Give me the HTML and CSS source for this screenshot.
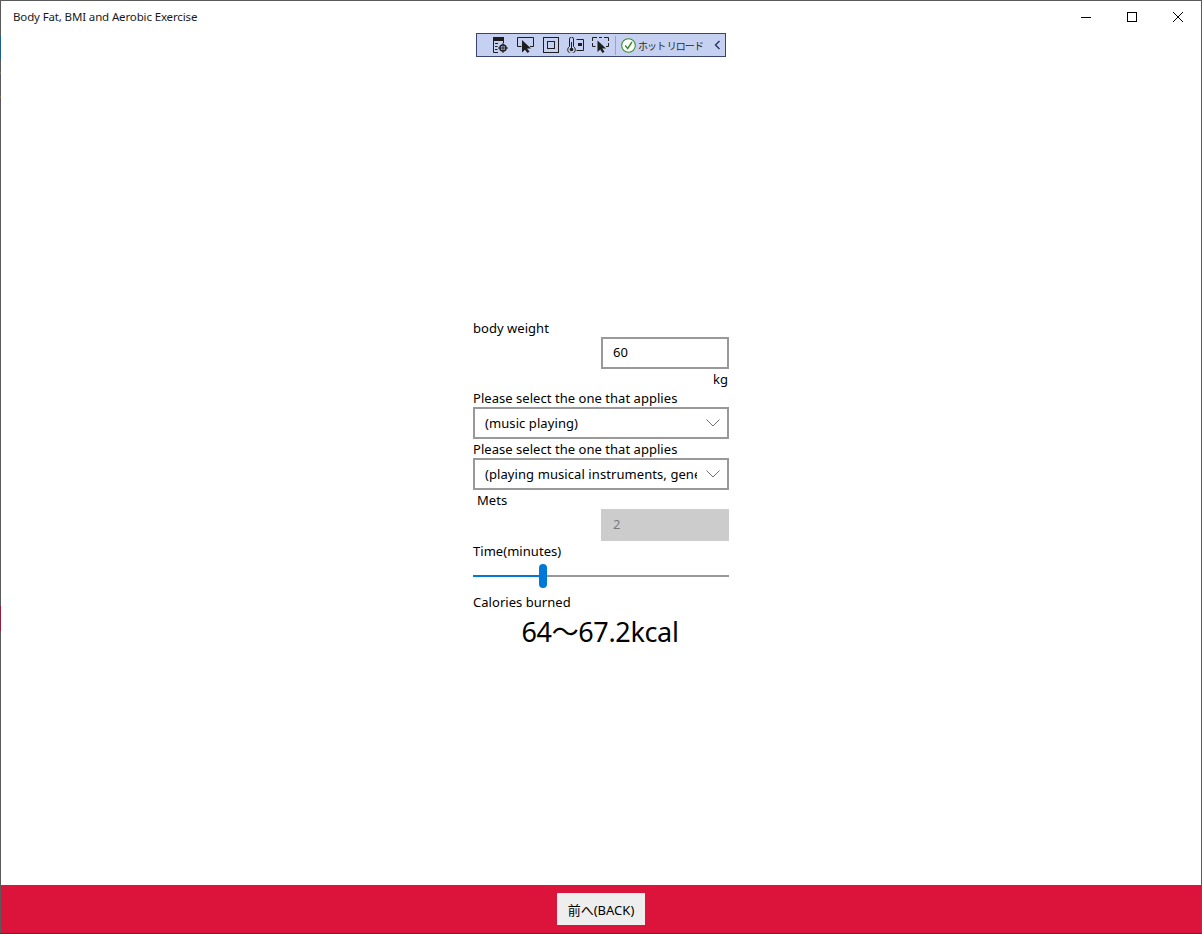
FILE: index.html
```html
<!DOCTYPE html>
<html lang="en">
<head>
<meta charset="utf-8">
<title>Body Fat, BMI and Aerobic Exercise</title>
<link rel="stylesheet" href="styles.css">
</head>
<body>
<div class="window">
  <header class="titlebar">
    <span class="title">Body Fat, BMI and Aerobic Exercise</span>
    <div class="caption">
      <button class="cap-btn" aria-label="Minimize"><svg width="10" height="10" viewBox="0 0 10 10"><path d="M0 5.500H10" stroke="#000" fill="none"/></svg></button>
      <button class="cap-btn" aria-label="Maximize"><svg width="10" height="10" viewBox="0 0 10 10"><rect x=".5" y=".5" width="9" height="9" stroke="#000" fill="none"/></svg></button>
      <button class="cap-btn" aria-label="Close"><svg width="10" height="10" viewBox="0 0 10 10"><path d="M0 0L10 10M10 0L0 10" stroke="#000" stroke-width="1" fill="none"/></svg></button>
    </div>
  </header>

  <div class="devbar">
    <span class="grip"></span>
    <svg class="dv" width="17" height="16" viewBox="0 0 17 16"><path d="M1.500 15.500V.5H11.500V6M1.500 3.500H11.500" stroke="#1e1e1e" fill="none"/><path d="M1 0H12V3H1Z" fill="#1e1e1e"/><path d="M3 6.500H6M3 9.500H5.500M3 12.500H5.500M1.500 15.500H6" stroke="#1e1e1e" fill="none"/><circle cx="11" cy="11" r="3" stroke="#1e1e1e" stroke-width="1.500" fill="none"/><path d="M11 6V16M6 11H16" stroke="#1e1e1e"/></svg>
    <svg class="dv" width="17" height="16" viewBox="0 0 17 16"><path d="M4.500 9.500H.5V.5H16.500V9.500H13" stroke="#1e1e1e" fill="none"/><path d="M5 3V15.500L8 12.800L10.500 16L12.500 14.500L10 11.500H14Z" fill="#1e1e1e"/></svg>
    <svg class="dv" width="17" height="16" viewBox="0 0 17 16"><rect x="1.500" y=".5" width="15" height="15" stroke="#1e1e1e" fill="none"/><rect x="5.500" y="4.500" width="7" height="7" stroke="#1e1e1e" fill="none"/></svg>
    <svg class="dv" width="17" height="16" viewBox="0 0 17 16"><path d="M2.500 9.500V2a2 2 0 0 1 4 0V9.500a3.800 3.800 0 1 1-4 0Z" stroke="#1e1e1e" fill="none"/><circle cx="4.500" cy="12.500" r="1.800" fill="#1e1e1e"/><path d="M4.500 5V11" stroke="#1e1e1e"/><path d="M9.500 2.500H16.500V13.500H9.500" stroke="#1e1e1e" fill="none"/><rect x="11" y="6" width="4" height="3" fill="#1e1e1e"/></svg>
    <svg class="dv" width="17" height="16" viewBox="0 0 17 16"><path d="M.5 4V.5H5M7 .5H10M12 .5H16.500V4M.5 6V9.500H3.500M16.500 6V9.500H14" stroke="#1e1e1e" fill="none"/><path d="M5.500 3.500V15L8.200 12.500L10.500 16L12.500 14.800L10.200 11.500H14Z" fill="#1e1e1e"/></svg>
    <span class="sep"></span>
    <svg class="ok" width="15" height="15" viewBox="0 0 15 15"><circle cx="7.500" cy="7.500" r="6.800" fill="#fff" stroke="#3c8a2e" stroke-width="1.100"/><path d="M4.200 7.500L6.700 10.500L11 4" stroke="#3c8a2e" stroke-width="1.400" fill="none"/></svg>
    <span class="reload">ホット リロード</span>
    <svg class="chev" width="7" height="10" viewBox="0 0 7 10"><path d="M5.500 1L1.500 5L5.500 9" stroke="#2b3a67" stroke-width="1.500" fill="none"/></svg>
  </div>

  <main class="content">
    <form class="form">
      <div class="label">body weight</div>
      <div class="field field-half"><span>60</span></div>
      <div class="label label-right">kg</div>
      <div class="label">Please select the one that applies</div>
      <div class="field">
        <span class="value">(music playing)</span>
        <svg class="drop" width="14" height="8" viewBox="0 0 14 8"><path d="M.5 .5L7 7L13.500 .5" stroke="#6e6e6e" fill="none"/></svg>
      </div>
      <div class="label">Please select the one that applies</div>
      <div class="field">
        <span class="value">(playing musical instruments, general)</span>
        <svg class="drop" width="14" height="8" viewBox="0 0 14 8"><path d="M.5 .5L7 7L13.500 .5" stroke="#6e6e6e" fill="none"/></svg>
      </div>
      <div class="label label-indent">Mets</div>
      <div class="field field-half field-disabled"><span>2</span></div>
      <div class="label">Time(minutes)</div>
      <div class="slider">
        <span class="track track-on"></span>
        <span class="thumb"></span>
        <span class="track track-off"></span>
      </div>
      <div class="label">Calories burned</div>
      <div class="result">64〜67.2kcal</div>
    </form>
  </main>

  <footer class="footer">
    <button class="back" type="button">前へ(BACK)</button>
  </footer>
</div>
</body>
</html>
```

FILE: styles.css
```css
* { box-sizing: border-box; }
html, body { margin: 0; height: 100%; }
body {
  font-family: "Noto Sans", "Noto Sans CJK JP", sans-serif;
  color: #000;
  background:
    linear-gradient(#5a5a5a 0 36px, #1f5f8f 36px 60px, #5a5a5a 60px 72px, #8a6a4a 72px 74px, #5a5a5a 74px 96px, #8a6a4a 96px 98px, #5a5a5a 98px 606px, #8f1f3f 606px 631px, #5a5a5a 631px 933px, #3a3a42 933px) left top / 1px 100% no-repeat,
    linear-gradient(#5a5a5a 0 933px, #3a3a42 933px);
  overflow: hidden;
}
.window {
  position: relative;
  width: 1200px;
  height: 932px;
  margin: 1px 0 0 1px;
  display: flex;
  flex-direction: column;
  background: #fff;
}
.titlebar {
  height: 31px;
  flex: none;
  display: flex;
  align-items: center;
  justify-content: space-between;
  padding-left: 12px;
}
.title {
  font-size: 11.500px;
  color: #1a1a1a;
  letter-spacing: -.14px;
}
.caption { display: flex; align-self: stretch; }
.cap-btn {
  width: 46px;
  border: 0;
  padding: 0;
  background: none;
  display: flex;
  align-items: center;
  justify-content: center;
}
.devbar {
  position: absolute;
  left: 475px;
  top: 32px;
  width: 250px;
  height: 24px;
  display: flex;
  align-items: center;
  background: #c6d0f0;
  border: 1px solid #39456f;
  padding-left: 2px;
}
.grip {
  width: 7px;
  height: 18px;
  margin-right: 6px;
  background-image: radial-gradient(#7d86a6 45%, transparent 50%);
  background-size: 2px 2px;
  flex: none;
}
.dv { margin-right: 8px; flex: none; }
.sep { width: 1px; height: 19px; background: #9aa3c0; margin: 0 5px 0 -2px; flex: none; }
.ok { flex: none; margin-right: 2px; }
.reload {
  font-family: "Noto Sans CJK JP", sans-serif;
  font-size: 10px;
  color: #2a2a2a;
  white-space: nowrap;
  letter-spacing: -.9px;
}
.chev { margin-left: auto; margin-right: 4px; flex: none; }
.content {
  flex: 1;
  display: flex;
  justify-content: center;
  padding-top: 286px;
}
.form {
  width: 256px;
  display: flex;
  flex-direction: column;
}
.label {
  height: 19px;
  flex: none;
  font-size: 13px;
  line-height: 21px;
  letter-spacing: .04px;
  white-space: nowrap;
}
.label-right { text-align: right; padding-right: 1px; }
.label-indent { padding-left: 4px; }
.field {
  height: 32px;
  flex: none;
  border: 2px solid #999;
  display: flex;
  align-items: center;
  padding: 0 7px 0 10px;
  font-size: 13px;
  letter-spacing: .08px;
}
.field-half { width: 128px; align-self: flex-end; padding-bottom: 2px; }
.field-disabled { background: #ccc; border-color: #ccc; color: #7a7a7a; }
.value { flex: 1; min-width: 0; overflow: hidden; white-space: nowrap; }
.drop { flex: none; margin-left: 9px; }
.slider {
  height: 32px;
  flex: none;
  display: flex;
  align-items: center;
}
.track { height: 2px; display: block; }
.track-on { width: 66px; background: #0078d7; }
.track-off { flex: 1; background: #999; }
.thumb {
  width: 8px;
  height: 24px;
  border-radius: 4px;
  background: #0078d7;
  flex: none;
}
.result {
  height: 41px;
  font-size: 27px;
  line-height: 41px;
  text-align: center;
  white-space: nowrap;
  letter-spacing: -.35px;
  padding-right: 2px;
}
.footer {
  height: 48px;
  flex: none;
  background: #dc143c;
  display: flex;
  align-items: center;
  justify-content: center;
}
.back {
  width: 88px;
  height: 32px;
  border: 0;
  padding: 0;
  background: #eee;
  color: #000;
  font-family: "Noto Sans", "Noto Sans CJK JP", sans-serif;
  font-size: 13px;
  letter-spacing: 0;
}
```
